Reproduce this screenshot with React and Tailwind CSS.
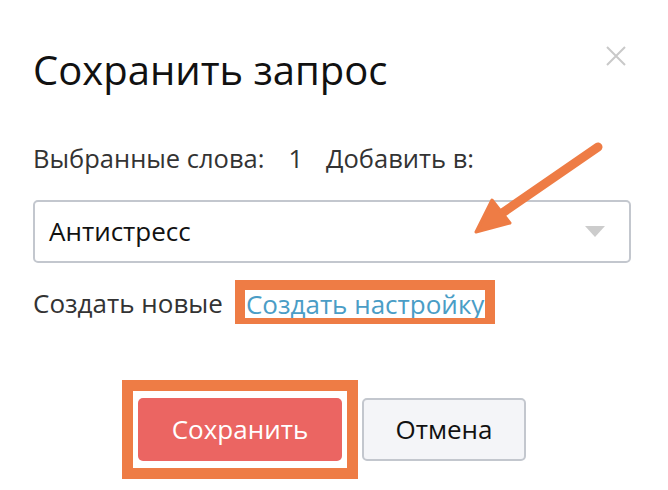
import React from "react";

export default function App() {
  return (
    <div
      className="relative w-[668px] h-[490px] bg-white overflow-hidden"
      style={{ fontFamily: '"Open Sans", "Noto Sans", sans-serif' }}
    >
      <button className="absolute left-[605px] top-[45px] w-[22px] h-[22px] flex items-center justify-center">
        <svg width="22" height="22" viewBox="0 0 22 22">
          <path d="M2 2 L20 20 M20 2 L2 20" stroke="#c9c9c9" strokeWidth="2" />
        </svg>
      </button>

      <div className="flex flex-col pl-[33px] pr-[37px] pt-[46px]">
        <h1 className="text-[40px] leading-[48px] text-[#111]">Сохранить запрос</h1>

        <div className="mt-[48px] flex items-center text-[25.5px] leading-[32px] text-[#333]">
          <span>Выбранные слова:</span>
          <span className="ml-[24px]">1</span>
          <span className="ml-[23px]">Добавить в:</span>
        </div>

        <div className="mt-[26px] h-[63px] w-[598px] rounded-[5px] border-2 border-[#c3c7ce] flex items-center justify-between pl-[14px] pr-[24px]">
          <span className="text-[26px] text-[#111]">Антистресс</span>
          <svg width="20" height="11" viewBox="0 0 20 11">
            <path d="M0 0 L20 0 L10 11 Z" fill="#cccccc" />
          </svg>
        </div>

        <div className="mt-[17px] flex items-center text-[26px] text-[#333]">
          <span className="mt-[2px]">Создать новые</span>
          <div className="ml-[12px] border-[10px] border-b-[6px] border-[#ee7c45] px-[1px] h-[44px] flex items-center overflow-hidden">
            <span className="text-[#4a9dc6] leading-[28px]">Создать настройку</span>
          </div>
        </div>

        <div className="mt-[56px] flex items-start pl-[89px]">
          <div className="border-[11px] border-[#ee7c45] px-[5px] py-[7px]">
            <button className="w-[204px] h-[63px] rounded-[5px] bg-[#eb6562] text-white text-[26px]">
              Сохранить
            </button>
          </div>
          <button className="ml-[4px] mt-[18px] w-[164px] h-[63px] rounded-[5px] border-2 border-[#c3c7ce] bg-[#f4f5f8] text-[#111] text-[26px]">
            Отмена
          </button>
        </div>
      </div>

      <svg className="absolute left-0 top-0 pointer-events-none" width="668" height="490">
        <path d="M598 147 L495 218" stroke="#ee7c45" strokeWidth="9" strokeLinecap="round" />
        <path d="M476 232 L492 200 L510 223 Z" fill="#ee7c45" stroke="#ee7c45" strokeWidth="3" strokeLinejoin="round" />
      </svg>
    </div>
  );
}
